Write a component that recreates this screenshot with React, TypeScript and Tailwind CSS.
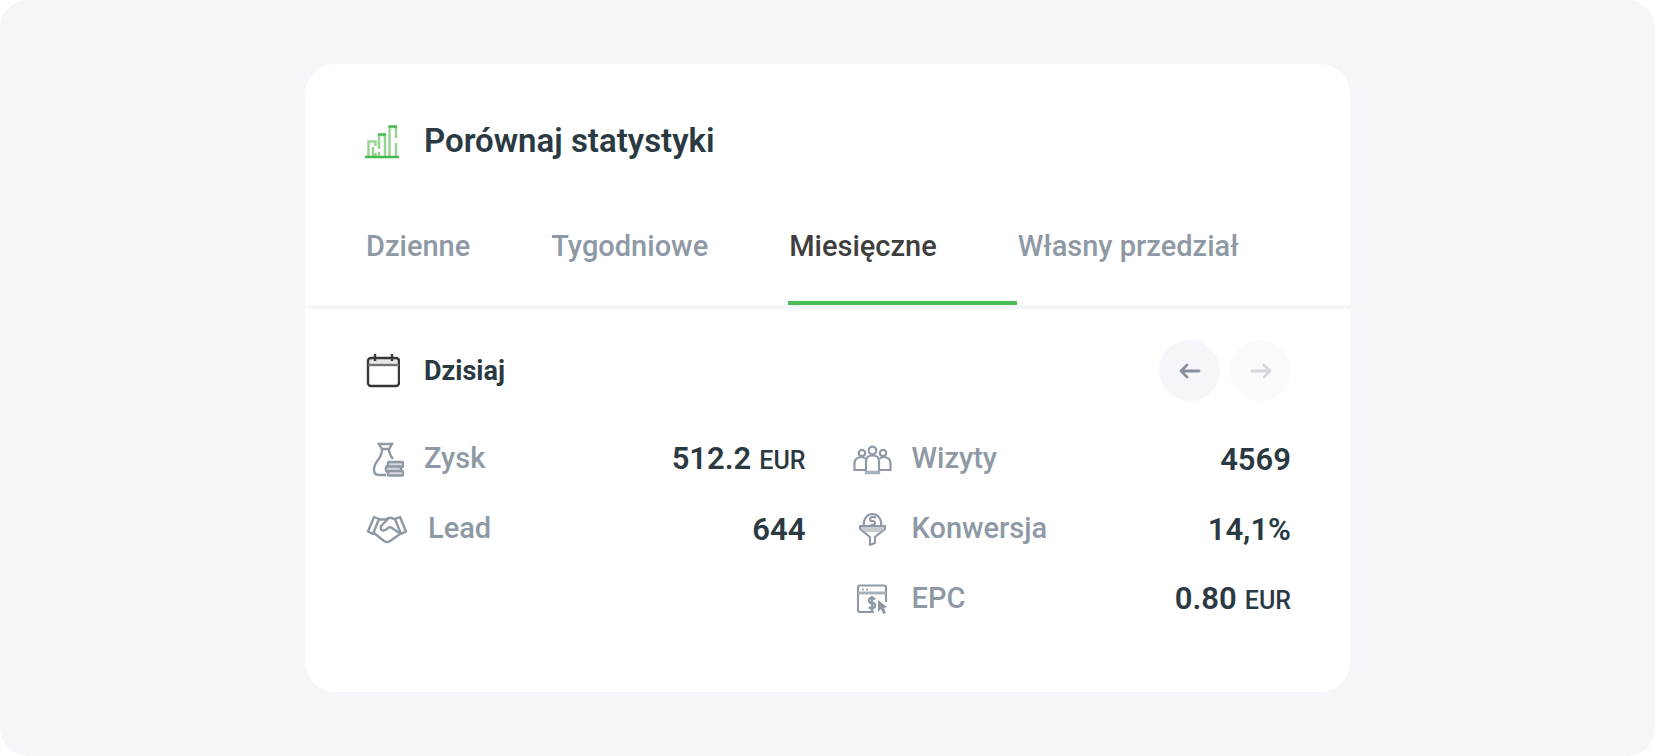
import React, { useState } from 'react';

interface IconProps {
  className?: string;
}

const BarsIcon: React.FC<IconProps> = ({ className }) => (
  <svg className={className} viewBox="0 0 34 34" fill="none" aria-hidden="true">
    <g stroke="#9AD394" strokeWidth="2.500">
      <path d="M3.500 31V16.500H10.500V21M8 22V31M10.500 31V28" />
      <path d="M14 24V10H20V31M14 31V27" />
      <path d="M24.500 31V2H31V13M31 18V31" />
    </g>
    <path d="M23.500 1.500H32M13 9.500H21" stroke="#4CBB55" strokeWidth="2.500" />
    <path d="M0 32H34" stroke="#45BA50" strokeWidth="2.500" />
  </svg>
);

const CalendarIcon: React.FC<IconProps> = ({ className }) => (
  <svg className={className} viewBox="0 0 34 34" fill="none" aria-hidden="true">
    <path d="M2 11V6Q2 4 5 4H30Q33 4 33 6V11Z" fill="#E4E6E7" />
    <rect x="2" y="4" width="31" height="28" rx="3" stroke="#35373B" strokeWidth="2.400" />
    <path d="M2 11H33" stroke="#6F7275" strokeWidth="2.400" />
    <path d="M9 0V7M26 0V7" stroke="#35373B" strokeWidth="2.400" />
  </svg>
);

const FlaskIcon: React.FC<IconProps> = ({ className }) => (
  <svg className={className} viewBox="0 0 38 38" fill="none" stroke="#8E99A5" strokeWidth="2.400" aria-hidden="true">
    <path d="M13 3H26L23 8H16Z" />
    <path d="M16 8Q16 14 12 19T8 29Q8 34 13 34H20" />
    <path d="M23 8Q23 13 27 18" />
    <g fill="#D5DADF">
      <rect x="22" y="21" width="15" height="5" rx="1" />
      <rect x="20" y="25.500" width="15" height="5" rx="1" />
      <rect x="22" y="30" width="15" height="4.500" rx="1" />
    </g>
  </svg>
);

const HandshakeIcon: React.FC<IconProps> = ({ className }) => (
  <svg
    className={className}
    viewBox="0 0 42 38"
    fill="none"
    stroke="#8E99A5"
    strokeWidth="2.400"
    strokeLinejoin="round"
    strokeLinecap="round"
    aria-hidden="true"
  >
    <path d="M8 6L13 8L7 23L2 20.500Z" />
    <path d="M34 6L29 8L35 23L40 20.500Z" />
    <path d="M13 8.500L20 8.500Q24 5 29 8.500" />
    <path d="M22 8L15 15Q14 19 17 19.500Q20 19.500 22 17Q24 15.500 26 17L34 22.500" />
    <path d="M8 22L18 30Q21 32 24 30L34 23" />
  </svg>
);

const VisitorsIcon: React.FC<IconProps> = ({ className }) => (
  <svg className={className} viewBox="0 0 40 38" fill="none" stroke="#8E99A5" strokeWidth="2.200" aria-hidden="true">
    <circle cx="10" cy="12" r="3.200" />
    <circle cx="31" cy="12" r="3.200" />
    <circle cx="20.500" cy="9.500" r="3.800" />
    <path d="M13 29H2.500V22Q3 16 10 16Q12 16 13 18" />
    <path d="M28 29H38.500V22Q38 16 31 16Q29 16 28 18" />
    <path d="M14 32V20Q14 14.500 20.500 14.500T27 20V32Z" fill="#fff" />
    <path d="M13 31.500H28" stroke="#A9B2BB" strokeWidth="3.500" />
  </svg>
);

const FunnelIcon: React.FC<IconProps> = ({ className }) => (
  <svg className={className} viewBox="0 0 40 38" fill="none" stroke="#8E99A5" strokeWidth="2.100" aria-hidden="true">
    <path d="M12 15Q11 11 13.500 7Q16 3 20.500 3T27.500 7Q30 11 29 15" />
    <path d="M24 7Q22 5.500 20 6Q18 6.500 18 8.500Q18 10 20.500 10T23 12.500Q23 14 18.500 14" />
    <path d="M8 16H33L28 21H13Z" fill="#C6CCD2" stroke="none" />
    <path d="M8 15V18L18 26V34L23 32V26L33 18V15Z" strokeLinejoin="round" />
  </svg>
);

const BrowserIcon: React.FC<IconProps> = ({ className }) => (
  <svg className={className} viewBox="0 0 40 38" fill="none" stroke="#8E99A5" strokeWidth="2.100" aria-hidden="true">
    <path d="M22 31H8Q6 31 6 29V6Q6 4.500 8 4.500H32Q34 4.500 34 6V21" />
    <path d="M6 12H34" stroke="#A9B2BB" strokeWidth="3" />
    <path d="M10 8.500H12M14 8.500H16" strokeWidth="1.500" />
    <path
      d="M23 18.500Q22 17 20 17Q17 17 17 19.500T20 22T23 24.500T20 27.500Q18 27.500 17 26M20 15V30"
      strokeWidth="2.300"
    />
    <path d="M26 19L35 26L32 27L34 32L31 33L29 28L26 31Z" fill="#8E99A5" stroke="none" />
  </svg>
);

const ArrowIcon: React.FC<IconProps> = ({ className }) => (
  <svg
    className={className}
    viewBox="0 0 22 16"
    fill="none"
    stroke="currentColor"
    strokeWidth="2.800"
    strokeLinecap="round"
    strokeLinejoin="round"
    aria-hidden="true"
  >
    <path d="M20 8H2M8 2L2 8L8 14" />
  </svg>
);

const tabs = ['Dzienne', 'Tygodniowe', 'Miesięczne', 'Własny przedział'];

interface StatProps {
  icon: React.ReactNode;
  label: string;
  value: string;
  unit?: string;
}

const Stat: React.FC<StatProps> = ({ icon, label, value, unit }) => (
  <div className="flex h-[70px] items-center gap-5">
    {icon}
    <dt className="flex-1 pb-1 text-[29px] leading-8 font-medium text-[#8E99A5]">{label}</dt>
    <dd className="text-[31px] leading-8 font-semibold text-[#2B3A42]">
      {value}
      {unit && <span className="ml-2 text-[25px] font-medium">{unit}</span>}
    </dd>
  </div>
);

const App: React.FC = () => {
  const [activeTab, setActiveTab] = useState('Miesięczne');

  return (
    <div className="bg-white font-['Roboto',sans-serif]">
      <main className="flex min-h-screen items-center justify-center rounded-[28px] bg-[#F4F6FA]">
        <section className="w-full max-w-[1045px] rounded-[30px] bg-white pb-[57px]">
          {/* Header */}
          <header className="flex items-center gap-[25px] px-[60px] pt-[57px]">
            <BarsIcon className="h-[34px] w-[34px] shrink-0" />
            <h1 className="pb-px text-[33px] leading-10 font-semibold text-[#2B3A42]">Porównaj statystyki</h1>
          </header>

          {/* Period tabs */}
          <div role="tablist" className="mt-[59px] flex border-b-4 border-[#F4F6FA] pl-[60px]">
            {tabs.map((tab) => (
              <button
                key={tab}
                type="button"
                role="tab"
                aria-selected={tab === activeTab}
                onClick={() => setActiveTab(tab)}
                className={`border-b-4 pr-20 pb-[30px] pl-px text-[29px] leading-[50px] font-medium whitespace-nowrap ${
                  tab === activeTab ? 'border-[#49BD55] text-[#3F3F3F]' : 'border-transparent text-[#8E99A5]'
                }`}
              >
                {tab}
              </button>
            ))}
          </div>

          <div className="pt-[31px] pr-[59px] pl-[61px]">
            {/* Selected day with paging */}
            <div className="flex items-center">
              <CalendarIcon className="mr-6 h-[34px] w-[34px] shrink-0" />
              <h2 className="flex-1 text-[27px] leading-8 font-bold text-[#2B3A42]">Dzisiaj</h2>
              <div className="flex gap-[10px]">
                <button
                  type="button"
                  aria-label="Poprzedni"
                  className="flex h-[61px] w-[61px] items-center justify-center rounded-full bg-[#F4F6FA] text-[#87919D]"
                >
                  <ArrowIcon className="h-4 w-[22px]" />
                </button>
                <button
                  type="button"
                  aria-label="Następny"
                  disabled
                  className="flex h-[61px] w-[61px] items-center justify-center rounded-full bg-[#F9FAFC] text-[#D3D8DE]"
                >
                  <ArrowIcon className="h-4 w-[22px] rotate-180" />
                </button>
              </div>
            </div>

            {/* Stats */}
            <div className="mt-6 grid grid-cols-2 gap-x-[46px]">
              <dl>
                <Stat icon={<FlaskIcon className="h-[38px] w-[38px] shrink-0" />} label="Zysk" value="512.2" unit="EUR" />
                <Stat icon={<HandshakeIcon className="h-[38px] w-[42px] shrink-0" />} label="Lead" value="644" />
              </dl>
              <dl>
                <Stat icon={<VisitorsIcon className="h-[38px] w-10 shrink-0" />} label="Wizyty" value="4569" />
                <Stat icon={<FunnelIcon className="h-[38px] w-10 shrink-0" />} label="Konwersja" value="14,1%" />
                <Stat icon={<BrowserIcon className="h-[38px] w-10 shrink-0" />} label="EPC" value="0.80" unit="EUR" />
              </dl>
            </div>
          </div>
        </section>
      </main>
    </div>
  );
};

export default App;
